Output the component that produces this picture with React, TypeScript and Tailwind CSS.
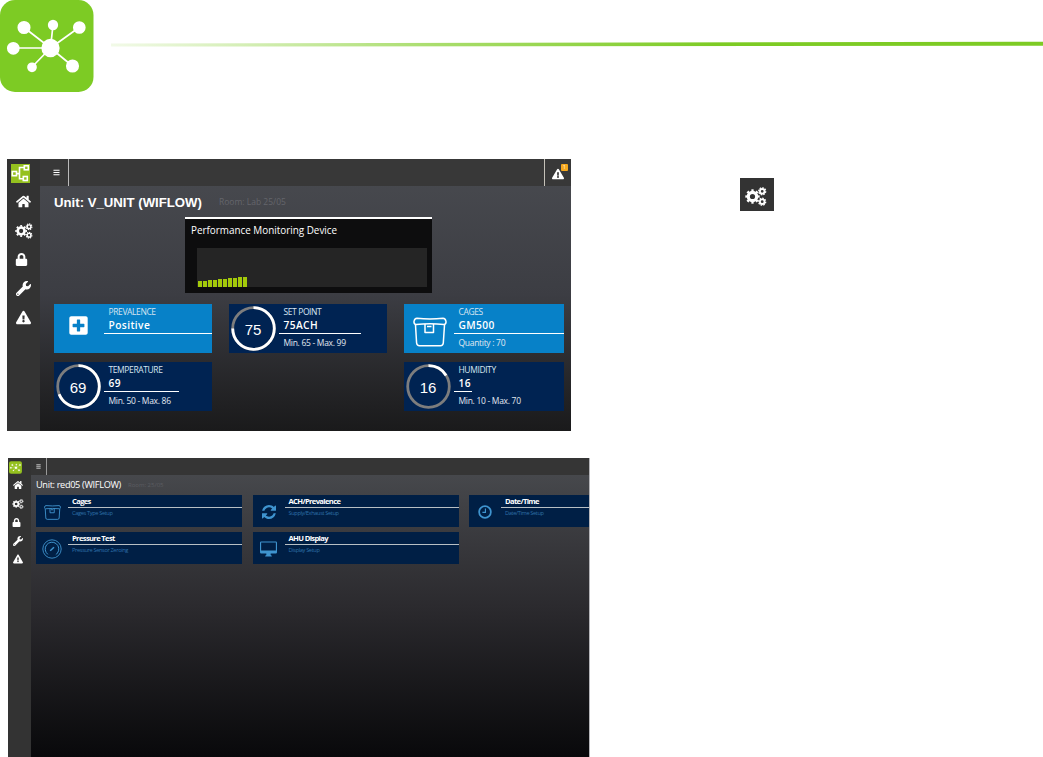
import { FaHome, FaLock, FaWrench, FaExclamationTriangle, FaPlusSquare, FaBars } from "react-icons/fa";

function CogsIcon({ className }: any) {
    return (
        <svg className={className} viewBox="0 0 22 19" fill="none" stroke="currentColor">
            <circle cx="7.500" cy="9.500" r="4.200" strokeWidth="3.200" />
            <circle cx="7.500" cy="9.500" r="6.200" strokeWidth="2" pathLength="80" strokeDasharray="5 5" strokeDashoffset="2.500" />
            <circle cx="17.200" cy="4.300" r="2.300" strokeWidth="1.800" />
            <circle cx="17.200" cy="4.300" r="3.500" strokeWidth="1.300" pathLength="80" strokeDasharray="6 4" />
            <circle cx="17.200" cy="14.700" r="2.300" strokeWidth="1.800" />
            <circle cx="17.200" cy="14.700" r="3.500" strokeWidth="1.300" pathLength="80" strokeDasharray="6 4" />
        </svg>
    );
}

const NAV_ICONS = [FaHome, CogsIcon, FaLock, FaWrench, FaExclamationTriangle];

function HubLogo({ className, bg }: any) {
    return (
        <svg className={className} viewBox="0 0 94 92">
            <rect width="93.5" height="92" rx="15" fill={bg} />
            <g stroke="#fff" strokeWidth="1.7" fill="#fff">
                <path d="M50.5 48L24 27.5M50.5 48L53 25M50.5 48L79 27.5M50.5 48L13 48M50.5 48L32 67M50.5 48L72.500 66" />
                <circle cx="50.500" cy="48" r="8.300" />
                <circle cx="24" cy="27.500" r="5.700" />
                <circle cx="53" cy="25" r="4.300" />
                <circle cx="79.300" cy="27.500" r="5.500" />
                <circle cx="13.300" cy="48.300" r="5.500" />
                <circle cx="32" cy="67.300" r="4" />
                <circle cx="72.500" cy="66" r="5.700" />
            </g>
        </svg>
    );
}

function TreeLogo() {
    return (
        <svg className="h-[19px] w-[19px]" viewBox="0 0 19 19" fill="none" stroke="#fff" strokeWidth="1.6">
            <rect width="19" height="19" fill="#95c11f" stroke="none" />
            <rect x="1.300" y="7.500" width="4.200" height="4.200" />
            <rect x="13.300" y="1.800" width="4" height="4" />
            <rect x="12.300" y="12.500" width="4" height="4" />
            <path d="M5.500 9.600H8.500M13.300 3.500H8.500V14.700H12.300" />
        </svg>
    );
}

function CageIcon({ className, strokeWidth = 1.5 }: any) {
    return (
        <svg className={className} viewBox="0 0 34 30" fill="none" stroke="currentColor" strokeWidth={strokeWidth} strokeLinejoin="round">
            <path d="M4 1.200Q17 2.600 30 1.200Q32.500 1.200 33 4.500Q33.200 7.300 31 7.500Q17 6.200 3 7.500Q.800 7.300 1 4.500Q1.500 1.200 4 1.200Z" />
            <path d="M2.500 8L3.600 26Q3.900 28.700 6.500 28.700H27.500Q30 28.700 30.300 26L31.500 8" />
            <path d="M12 7V15.500H20.500V7M14 9.500H18.500" />
        </svg>
    );
}

function GaugeIcon({ className }: any) {
    return (
        <svg className={className} viewBox="0 0 20 20" fill="none" stroke="currentColor" strokeWidth="0.9">
            <circle cx="10" cy="10" r="9.200" />
            <circle cx="10" cy="10" r="6.800" strokeDasharray="34 9" transform="rotate(128 10 10)" />
            <path d="M8.200 11.800L12 8.200" strokeWidth="1.500" />
        </svg>
    );
}

function RefreshIcon({ className }: any) {
    return (
        <svg className={className} viewBox="0 0 1536 1536" fill="currentColor">
            <path d="M1511 928q0 5-1 7-64 268-268 434.500T764 1536q-146 0-282.500-55T238 1324l-129 129q-19 19-45 19t-45-19-19-45V960q0-26 19-45t45-19h448q26 0 45 19t19 45-19 45l-137 137q71 66 161 102t187 36q134 0 250-65t186-179q11-17 53-117 8-23 30-23h192q13 0 22.500 9.500t9.500 22.500zm25-800v448q0 26-19 45t-45 19h-448q-26 0-45-19t-19-45 19-45l138-138Q969 256 768 256q-134 0-250 65T332 500q-11 17-53 117-8 23-30 23H50q-13 0-22.500-9.500T18 608v-7q65-268 270-434.500T768 0q146 0 284 55.500T1297 212l130-129q19-19 45-19t45 19 19 45z" />
        </svg>
    );
}

function ClockIcon({ className }: any) {
    return (
        <svg className={className} viewBox="0 0 16 16" fill="none" stroke="currentColor">
            <circle cx="8" cy="8" r="6.700" strokeWidth="2" />
            <path d="M8.500 4V8.500H5" strokeWidth="1.300" />
        </svg>
    );
}

function MonitorIcon({ className }: any) {
    return (
        <svg className={className} viewBox="0 0 18 16" fill="currentColor">
            <path fillRule="evenodd" d="M1.300 0H16.700Q18 0 18 1.300V11.500Q18 12.800 16.700 12.800H11.300V14.300L12.500 15.200V16H5.500V15.200L6.700 14.300V12.800H1.300Q0 12.800 0 11.500V1.300Q0 0 1.300 0ZM1.200 1.200V9.700H16.800V1.200Z" />
        </svg>
    );
}

function Ring({ value }: any) {
    return (
        <div className="mr-0.5 grid h-[45px] w-[45px] shrink-0 place-items-center">
            <svg className="col-start-1 row-start-1 h-[45px] w-[45px] -rotate-90" viewBox="0 0 45 45" fill="none" strokeWidth="2.800">
                <circle cx="22.500" cy="22.500" r="20.800" stroke="#7d7d7d" />
                <circle cx="22.500" cy="22.500" r="20.800" stroke="#fff" pathLength="100" strokeDasharray={`${value} 100`} />
            </svg>
            <span className="col-start-1 row-start-1 pt-0.5 font-['Liberation_Sans'] text-[15px] leading-none">{value}</span>
        </div>
    );
}

function StatCard({ label, value, note, ring, icon, bright, line }: any) {
    return (
        <div className={`flex h-[49px] ${bright ? "bg-[#0781c8]" : "bg-[#002352]"}`}>
            <div className="flex w-[50px] shrink-0 items-center justify-center">{ring ? <Ring value={ring} /> : icon}</div>
            <div className="flex-1 whitespace-nowrap">
                <div className="h-3.5 pl-[4.5px] pt-[3px] text-[8.5px] leading-[10px] tracking-[-0.4px] text-[#d7e4f0]">{label}</div>
                <div className="h-[15px] pl-[4.5px] text-[10.2px] font-semibold leading-[14px] tracking-[0.4px]">{value}</div>
                <div className={`h-px bg-white ${line}`} />
                <div className="pl-[4.5px] pt-1 text-[8.5px] leading-[10px] tracking-[-0.3px] text-[#e0e8f0]">{note}</div>
            </div>
        </div>
    );
}

function SetupCard({ title, note, icon }: any) {
    return (
        <div className="flex h-8 bg-[#001f45]">
            <div className="flex w-8 shrink-0 items-center justify-center pt-0.5 text-[#3f94cf]">{icon}</div>
            <div className="flex-1 whitespace-nowrap">
                <div className="h-3 pl-1 text-[7.6px] font-bold leading-[13px] tracking-[-0.65px]">{title}</div>
                <div className="h-px bg-[#b8bfc4]" />
                <div className="pl-1 pt-0.5 text-[5.7px] leading-[7px] tracking-[-0.38px] text-[#2d70a8]">{note}</div>
            </div>
        </div>
    );
}

function MonitorPanel() {
    const bars = [6, 6, 7, 7, 8, 8, 9, 9, 10, 10];
    return (
        <section className="ml-[7px] flex h-[272px] w-[564px] bg-[#333]">
            <nav className="flex w-[33px] flex-col items-center">
                <div className="flex h-7 w-full items-center pl-[3.5px]"><TreeLogo /></div>
                {NAV_ICONS.map((Icon, i) => (
                    <div key={i} className="flex h-[29px] items-center">
                        <Icon className={i === 1 ? "h-[16px] w-[18px]" : i === 2 ? "mr-1 h-[13px] w-[13px]" : "h-[15px] w-[15px]"} />
                    </div>
                ))}
            </nav>
            <div className="flex-1 bg-linear-to-b from-[#494b50] via-[#3c3d43] via-50% to-[#1a1a1b]">
                <header className="flex h-[27px] items-center bg-[#383838]">
                    <div className="flex h-full w-[29px] items-center justify-center border-r border-[#bbb] pl-1"><FaBars className="h-[7px] w-[7px]" /></div>
                    <div className="flex-1" />
                    <div className="relative flex h-full w-[27px] items-center border-l border-[#c4c1b8] pl-[7px]">
                        <FaExclamationTriangle className="mt-0.5 h-3 w-3" />
                        <span className="absolute left-4 top-[5px] h-[7px] w-[7px] rounded-[1px] bg-[#f6a81c] text-center text-[5px] leading-[7px]">1</span>
                    </div>
                </header>
                <div className="flex h-[31px] items-center pl-3.5 pt-0.5 whitespace-nowrap">
                    <h1 className="w-[165px] font-['Liberation_Sans'] text-[13.2px] font-bold">Unit: V_UNIT (WIFLOW)</h1>
                    <span className="text-[8.5px] text-[#64656b]">Room: Lab 25/05</span>
                </div>
                <div className="ml-[145px] h-[76px] w-[247px] border-t-2 border-white bg-[#0d0d0e] pl-3 pr-[5px]">
                    <h2 className="-ml-1.5 h-[29px] pt-1 text-[9.9px] leading-[15px]">Performance Monitoring Device</h2>
                    <div className="flex h-[39px] items-end gap-px bg-[#252525] pl-px">
                        {bars.map((height, i) => <div key={i} className="w-1 bg-[#a3ca0a]" style={{ height }} />)}
                    </div>
                </div>
                <div className="ml-3.5 mt-[11px] grid grid-cols-[158px_158px_160px] gap-x-[17px] gap-y-[9px]">
                    <StatCard bright label="PREVALENCE" value="Positive" line="w-full" icon={<FaPlusSquare className="mr-0.5 mt-[-6px] h-[21px] w-[21px]" />} />
                    <StatCard label="SET POINT" value="75ACH" note="Min. 65 - Max. 99" ring={75} line="w-[82px]" />
                    <StatCard bright label="CAGES" value="GM500" note="Quantity : 70" line="w-full" icon={<CageIcon className="ml-0.5 mt-1.5 h-[30px] w-[34px]" />} />
                    <StatCard label="TEMPERATURE" value="69" note="Min. 50 - Max. 86" ring={69} line="w-[75px]" />
                    <div />
                    <StatCard label="HUMIDITY" value="16" note="Min. 10 - Max. 70" ring={16} line="w-[18px]" />
                </div>
            </div>
        </section>
    );
}

function SetupPanel() {
    return (
        <section className="ml-2 mt-[27px] flex h-[299px] w-[582px] overflow-hidden border-r border-[#b5b5b9] bg-[#333]">
            <nav className="flex w-[23px] flex-col items-center">
                <div className="flex h-[18px] w-full items-center pl-px"><HubLogo className="h-[13px] w-[13px]" bg="#95c11f" /></div>
                {NAV_ICONS.map((Icon, i) => (
                    <div key={i} className="flex h-[18.5px] items-center">
                        <Icon className={i === 1 ? "mr-1 h-2.5 w-3" : i === 2 ? "mr-1.5 h-[9px] w-[9px]" : "mr-1 h-2.5 w-2.5"} />
                    </div>
                ))}
            </nav>
            <div className="min-w-0 flex-1 overflow-hidden bg-linear-to-b from-[#4a4c50] via-[#2b2a2e] via-50% to-[#09090b]">
                <header className="flex h-[17px] items-center bg-[#353535]">
                    <div className="flex h-full w-4 items-center justify-center border-r border-[#999]"><FaBars className="h-[5px] w-[5px]" /></div>
                </header>
                <div className="flex h-5 items-center pl-[5px] whitespace-nowrap">
                    <h1 className="w-[92px] text-[9.2px] tracking-[-0.34px]">Unit: red05 (WIFLOW)</h1>
                    <span className="text-[6px] text-[#5c5d62]">Room: 25/05</span>
                </div>
                <div className="ml-[5px] grid grid-cols-[206px_206px_206px] gap-x-[10.5px] gap-y-[5px]">
                    <SetupCard title="Cages" note="Cages Type Setup" icon={<CageIcon className="h-[15px] w-[17px]" strokeWidth={1.8} />} />
                    <SetupCard title="ACH/Prevalence" note="Supply/Exhaust Setup" icon={<RefreshIcon className="h-3.5 w-3.5" />} />
                    <SetupCard title="Date/Time" note="Date/Time Setup" icon={<ClockIcon className="h-3.5 w-3.5" />} />
                    <SetupCard title="Pressure Test" note="Pressure Sensor Zeroing" icon={<GaugeIcon className="h-5 w-5" />} />
                    <SetupCard title="AHU Display" note="Display Setup" icon={<MonitorIcon className="h-4 w-[17px]" />} />
                </div>
            </div>
        </section>
    );
}

export default function App() {
    return (
        <main className="h-[757px] w-[1043px] overflow-hidden bg-white font-['Open_Sans',sans-serif] text-white">
            <div className="flex h-[159px] items-start">
                <HubLogo className="h-[92px] w-[94px] shrink-0" bg="#7dcb24" />
                <svg className="ml-[17px] mt-[41px] h-[6px] w-[932px]" viewBox="0 0 932 6">
                    <defs>
                        <linearGradient id="rule">
                            <stop offset="0" stopColor="#f2fae8" />
                            <stop offset="0.35" stopColor="#a9dd6c" />
                            <stop offset="0.65" stopColor="#7dcb24" />
                        </linearGradient>
                    </defs>
                    <path d="M0 2.500L932 0.800V4.800L0 5.500Z" fill="url(#rule)" />
                </svg>
            </div>
            <div className="flex h-[272px]">
                <MonitorPanel />
                <div className="ml-[169px] mt-[19px] flex h-[33px] w-[34px] items-center justify-center bg-[#333]">
                    <CogsIcon className="mr-0.5 mt-1 h-[19px] w-[22px]" />
                </div>
            </div>
            <SetupPanel />
        </main>
    );
}
